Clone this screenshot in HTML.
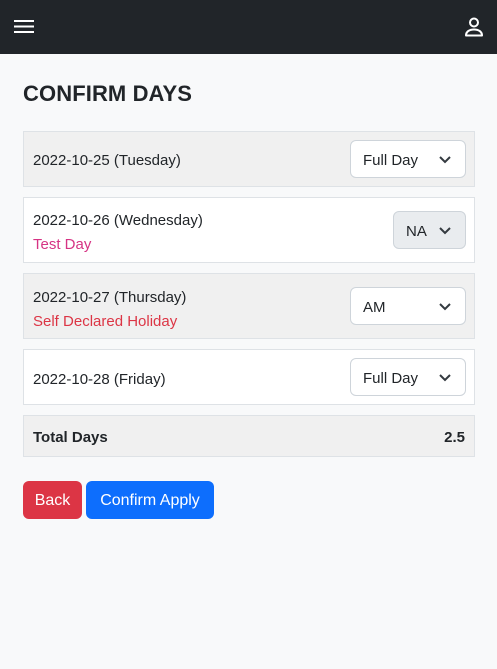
<!DOCTYPE html>
<html><head><style>
*{box-sizing:border-box;margin:0;padding:0}
body{width:497px;height:669px;background:#f8f9fa;font-family:"Liberation Sans","DejaVu Sans",sans-serif;color:#212529;position:relative;overflow:hidden;font-size:15px}
.nav{position:absolute;left:0;top:0;width:497px;height:54px;background:#212529}
.abs{position:absolute}
h1{position:absolute;left:23px;top:81px;font-size:22px;font-weight:bold;letter-spacing:0.1px}
.row{position:absolute;left:23px;width:452px;border:1px solid #dee2e6}
.g{background:#f0f0f0}.w{background:#fff}
.t{position:absolute;left:9px}
.red{color:#dc3545}
.sel{position:absolute;border:1px solid #ced4da;border-radius:6px;background:#fff;height:38px}
.sel span{position:absolute;left:12px;top:11px}
.sel svg{position:absolute;right:14px;top:15px}
.btn{position:absolute;top:481px;height:38px;border-radius:6px;color:#fff;font-size:16px;text-align:center;line-height:40px}
</style></head><body>
<div class="nav">
<svg class="abs" style="left:14px;top:19px" width="20" height="15"><path d="M0 2h20M0 7.5h20M0 13h20" stroke="#fff" stroke-width="2"/></svg>
<svg class="abs" style="left:464px;top:17px" width="20" height="20" viewBox="0 0 20 20"><circle cx="10" cy="5.5" r="4" fill="none" stroke="#fff" stroke-width="2"/><path d="M2 18.5c0-4 3.5-6 8-6s8 2 8 6z" fill="none" stroke="#fff" stroke-width="2" stroke-linejoin="round"/></svg>
</div>
<h1>CONFIRM DAYS</h1>
<div class="row g" style="top:131px;height:56px"><div class="t" style="top:20px">2022-10-25 (Tuesday)</div>
<div class="sel" style="left:326px;top:8px;width:116px"><span>Full Day</span><svg width="12" height="8"><path d="M1 1l5 5 5-5" stroke="#343a40" stroke-width="2" fill="none"/></svg></div></div>
<div class="row w" style="top:197px;height:66px"><div class="t" style="top:14px">2022-10-26 (Wednesday)</div><div class="t red" style="top:38px;color:#d63384">Test Day</div>
<div class="sel" style="left:369px;top:13px;width:73px;background:#e9ecef"><span>NA</span><svg width="12" height="8"><path d="M1 1l5 5 5-5" stroke="#343a40" stroke-width="2" fill="none"/></svg></div></div>
<div class="row g" style="top:273px;height:66px"><div class="t" style="top:15px">2022-10-27 (Thursday)</div><div class="t red" style="top:39px">Self Declared Holiday</div>
<div class="sel" style="left:326px;top:13px;width:116px"><span>AM</span><svg width="12" height="8"><path d="M1 1l5 5 5-5" stroke="#343a40" stroke-width="2" fill="none"/></svg></div></div>
<div class="row w" style="top:349px;height:56px"><div class="t" style="top:21px">2022-10-28 (Friday)</div>
<div class="sel" style="left:326px;top:8px;width:116px"><span>Full Day</span><svg width="12" height="8"><path d="M1 1l5 5 5-5" stroke="#343a40" stroke-width="2" fill="none"/></svg></div></div>
<div class="row g" style="top:415px;height:42px;font-weight:bold"><div class="t" style="top:13px">Total Days</div><div class="abs" style="right:9px;top:13px">2.5</div></div>
<div class="btn" style="left:23px;width:59px;background:#dc3545">Back</div>
<div class="btn" style="left:86px;width:128px;background:#0d6efd">Confirm Apply</div>
</body></html>
